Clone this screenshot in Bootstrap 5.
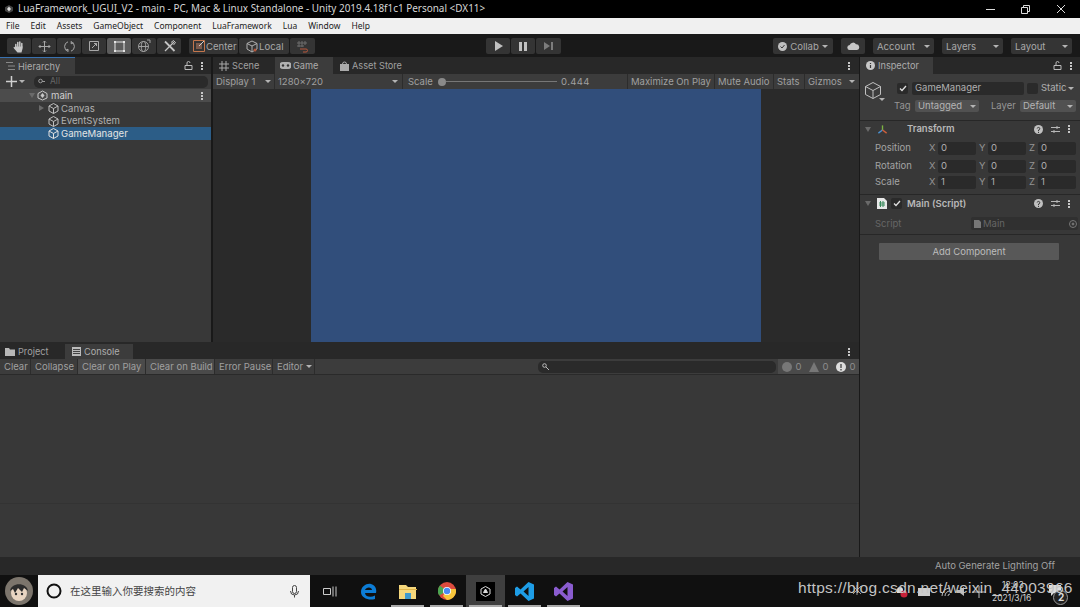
<!DOCTYPE html>
<html lang="en">
<head>
<meta charset="UTF-8">
<title>Unity Editor</title>
<link href="https://cdn.jsdelivr.net/npm/bootstrap@5.3.3/dist/css/bootstrap.min.css" rel="stylesheet">
<style>
  html, body { height: 607px; overflow: hidden; }
  body { background: #191919; font-family: Inter, "Liberation Sans", sans-serif; font-size: 9.5px; color: #b0b0b0; line-height: 1; position: relative; width: 1080px; white-space: nowrap; }
  svg { display: block; flex: none; }

  /* window chrome */
  .title-bar { height: 18px; background: #000; color: #d6d6d6; font-family: "Noto Sans", sans-serif; font-size: 9.95px; padding-left: 4px; gap: 4px; }
  .win-btns { margin-left: auto; gap: 26px; padding-right: 14px; }
  .menu-bar { height: 16px; background: #f0f0f0; color: #222; font-family: "Noto Sans", sans-serif; font-size: 8.5px; padding-left: 6px; gap: 11px; }

  /* toolbar */
  .tool-bar { height: 23px; background: #191919; padding: 4px 8px 0 7px; }
  .tool-btn { height: 16px; background: #343434; border-radius: 2px; margin-right: 1px; justify-content: center; color: #a8a8a8; font-size: 9.6px; flex: none; }
  .tool-btn span:not(.drop-caret) { padding-top: 1px; }
  .tool-btn.on { background: #5c5c5c; }
  .w-tool { width: 24px; }
  .w-drop { width: 61px; margin-right: 8px; padding: 0 4px; justify-content: space-between; }
  .w-drop.last-drop { margin-right: 0; }
  .btn-center { width: 49px; margin-left: 7px; padding-left: 4px; justify-content: flex-start; }
  .btn-center span { margin-left: 1px; }
  .btn-local { width: 50px; padding-left: 7px; justify-content: flex-start; }
  .btn-snap { width: 25px; }
  .btn-play { width: 24px; margin-left: auto; }
  .btn-pause { width: 24px; }
  .btn-step { width: 25px; margin-right: 212px; }
  .btn-collab { width: 60px; margin-right: 8px; gap: 3px; }
  .btn-cloud { width: 24px; margin-right: 8px; }
  .drop-caret { width: 0; height: 0; border-left: 3px solid transparent; border-right: 3px solid transparent; border-top: 3px solid #b4b4b4; flex: none; }

  /* panels */
  .left-stack { width: 859px; flex: none; }
  .main-row { height: 285px; gap: 2px; }
  .side-left { width: 211px; background: #383838; }
  .mid-col { width: 646px; background: #2a2a2a; }
  .tabs-row { height: 17px; background: #282828; font-size: 9.2px; }
  .tab-item { height: 17px; padding-left: 6px; color: #a0a0a0; flex: none; }
  .tab-item span { padding-top: 1px; }
  .tab-item.on { background: #3c3c3c; color: #acacac; }
  .tab-accent { border-top: 1px solid #3a72b0; }
  .tab-gap { margin-left: 3px; }
  .tab-hier { width: 75px; }
  .tab-scene { width: 62px; }
  .tab-game { width: 58px; padding-left: 5px; }
  .tab-game span { margin-left: 2px; }
  .tab-store { padding-left: 7px; }
  .tab-insp { width: 73px; }
  .low-tabs { padding-top: 2px; }
  .low-tabs .tab-item { height: 15px; }
  .tab-project { width: 65px; padding-left: 5px; }
  .tab-console { width: 68px; padding-left: 7px; }
  .panel-lock { margin-left: auto; margin-right: 8px; }
  .dots { width: 2px; height: 8px; background-image: radial-gradient(circle at 1px 1px, #c8c8c8 1px, transparent 1px); background-size: 2px 3px; flex: none; }
  .dots-end { margin-left: auto; margin-right: 9px; }
  .bar-row { height: 15px; background: #3c3c3c; font-size: 9.5px; }
  .bar-cell { height: 15px; padding: 0 3px; border-right: 1px solid #2c2c2c; color: #a0a0a0; flex: none; }

  /* hierarchy */
  .plus-ico { margin-left: 6px; }
  .caret-gap { margin-left: 2px; }
  .search-well { height: 12px; background: #2a2a2a; border-radius: 5px; padding-left: 4px; gap: 5px; color: #666; font-size: 8.5px; }
  .hier-search { margin-left: 9px; margin-right: 3px; flex-grow: 1; }
  .tree-row { height: 12.7px; font-size: 9.6px; gap: 2px; color: #b0b0b0; }
  .tree-row.head { height: 13px; background: #4c4c4c; color: #d0d0d0; padding-left: 29px; }
  .tree-row.sel { background: #2c5d87; color: #e4e4e4; }
  .tree-leaf { padding-left: 48px; }
  .tree-parent { padding-left: 39px; }
  .tree-parent svg { margin-left: 2px; }
  .main-lab { margin-left: 1px; }
  .dots-row { margin-left: auto; margin-right: 8px; }
  .arrow-r { width: 0; height: 0; border-top: 3px solid transparent; border-bottom: 3px solid transparent; border-left: 5px solid #6a6a6a; flex: none; }
  .arrow-d { width: 0; height: 0; border-left: 3px solid transparent; border-right: 3px solid transparent; border-top: 5px solid #6a6a6a; flex: none; }

  /* game */
  .game-view { height: 253px; background: #2a2a2a; }
  .game-blue { width: 450px; background: #314e7b; }
  .cell-display { width: 62px; justify-content: space-between; }
  .cell-res { width: 128px; justify-content: space-between; padding-right: 4px; }
  .cell-scale { width: 225px; padding-left: 5px; }
  .scale-lab { width: 30px; }
  .slider-knob { width: 8px; height: 8px; border-radius: 50%; background: #8a8a8a; flex: none; }
  .slider-line { width: 111px; height: 1px; background: #777; flex: none; }
  .scale-val { margin-left: 4px; letter-spacing: .4px; }
  .cell-max { width: 87px; }
  .cell-mute { width: 59px; }
  .cell-stats { width: 31px; }
  .cell-giz { flex-grow: 1; border: 0; justify-content: space-between; padding-right: 4px; }

  /* console */
  .low-wrap { height: 215px; background: #282828; }
  .cell-clear { width: 31px; padding-left: 4px; }
  .cell-collapse { width: 47px; padding-left: 4px; }
  .cell-cplay { width: 68px; padding-left: 4px; background: #4a4a4a; }
  .cell-cbuild { width: 69px; padding-left: 4px; background: #4a4a4a; }
  .cell-epause { width: 58px; padding-left: 4px; }
  .cell-editor { width: 42px; padding-left: 4px; gap: 3px; }
  .console-search { width: 238px; margin-left: 223px; }
  .count-group { background: #4a4a4a; height: 15px; width: 81px; margin-left: auto; flex: none; }
  .count-item { gap: 4px; flex: 1; justify-content: center; color: #8c8c8c; }
  .console-body { height: 183px; background: #383838; border-top: 1px solid #2a2a2a; }
  .console-low { height: 54px; border-top: 1px solid #333; margin-top: 128px; }

  /* inspector */
  .right-col { width: 221px; background: #383838; border-left: 1px solid #191919; height: 500px; flex: none; }
  .insp-head { height: 47px; border-bottom: 1px solid #272727; background: #3c3c3c; }
  .cube-big { margin: 8px 0 0 5px; }
  .cube-caret { margin: 24px 0 0 -2px; }
  .insp-fields { flex-grow: 1; padding-left: 12px; }
  .name-row { margin-top: 7px; height: 14px; }
  .tag-row { margin-top: 5px; height: 12px; margin-left: -3px; }
  .name-field { width: 112px; margin-left: 4px; }
  .static-box { margin-left: 3px; background: #333; }
  .static-lab { margin-left: 3px; }
  .static-caret { margin-left: 2px; }
  .tag-lab { width: 21px; color: #969696; }
  .layer-lab { width: 29px; margin-left: 12px; color: #969696; }
  .tag-drop { width: 64px; }
  .layer-drop { width: 56px; }
  .field-in { height: 13px; background: #2a2a2a; border-radius: 2px; color: #b0b0b0; padding-left: 3px; flex: none; }
  .drop-sm { height: 12px; background: #515151; border-radius: 2px; padding: 0 3px; color: #b4b4b4; justify-content: space-between; flex: none; }
  .check-box { width: 11px; height: 11px; background: #2a2a2a; border-radius: 2px; justify-content: center; flex: none; }
  .comp-head { height: 16px; font-weight: 600; color: #b8b8b8; padding-left: 5px; }
  .comp-script { height: 17px; margin-top: 4px; border-top: 1px solid #272727; box-sizing: content-box; }
  .axes-ico { margin-left: 6px; }
  .transform-lab { margin-left: 19px; }
  .script-ico { margin-left: 6px; }
  .script-check { margin-left: 4px; }
  .script-lab { margin-left: 5px; }
  .comp-tools { margin-left: auto; padding-right: 10px; gap: 8px; }
  .prop-row { height: 16px; color: #a4a4a4; }
  .prop-first { margin-top: 3px; }
  .prop-gap { margin-top: 2px; }
  .prop-lab { width: 69px; padding-left: 15px; flex: none; }
  .axis-lab { width: 9px; color: #949494; flex: none; }
  .axis-next { margin-left: 3px; }
  .vec-field { width: 38px; }
  .script-row { height: 23px; border-bottom: 1px solid #272727; color: #666; padding-left: 15px; padding-top: 1px; }
  .script-name { width: 96px; flex: none; }
  .script-field { background: #303030; color: #666; gap: 2px; flex-grow: 1; margin-right: 2px; }
  .script-target { margin-left: auto; margin-right: 1px; }
  .add-btn { width: 180px; height: 17px; background: #585858; color: #bcbcbc; margin: 8px 0 0 19px; justify-content: center; border-radius: 1px; }

  /* status + taskbar */
  .status-bar { height: 18px; background: #282828; justify-content: flex-end; padding-right: 25px; color: #a2a2a2; font-size: 9.5px; }
  .task-bar { height: 32px; background: #101010; }
  .avatar-wrap { width: 38px; justify-content: center; flex: none; }
  .task-search { width: 272px; height: 32px; background: #f1f1f1; color: #444; font-family: "Noto Sans CJK SC", sans-serif; font-size: 10.5px; padding: 0 11px 0 8px; gap: 8px; flex: none; }
  .mic-ico { margin-left: auto; }
  .task-ico { width: 39px; height: 32px; justify-content: center; position: relative; flex: none; }
  .task-ico.run::after { content: ""; position: absolute; left: 3px; right: 3px; bottom: 0; height: 2px; background: #aaa; }
  .task-ico.act { background: #3f3f3f; }
  .unity-tile { background: #000; width: 19px; height: 19px; justify-content: center; }

  /* tray and watermark lie over the taskbar */
  .watermark { position: absolute; left: 798px; top: 580px; font-family: "Liberation Sans", sans-serif; font-size: 15.5px; color: #c4c4c4; letter-spacing: .3px; }
  .tray-date { position: absolute; left: 992px; top: 594px; font-size: 8.5px; color: #d0d0d0; }
  .tray-time { position: absolute; left: 1002px; top: 581px; font-size: 8.5px; color: #d0d0d0; }
  .tray-ico { position: absolute; }
  .tray-a { left: 852px; top: 585px; }
  .tray-b { left: 896px; top: 586px; }
  .tray-c { left: 918px; top: 588px; }
  .tray-d { left: 941px; top: 587px; }
  .tray-e { left: 957px; top: 586px; }
  .tray-f { left: 972px; top: 586px; }
  .tray-g { left: 1049px; top: 585px; }
  .tray-h { left: 1053px; top: 590px; }
  .tray-num { position: absolute; left: 1058px; top: 592px; font-size: 10px; font-weight: 700; color: #ddd; }
</style>
</head>
<body>

<div class="title-bar d-flex align-items-center">
  <svg width="10" height="10" viewBox="0 0 10 10"><path d="M5 1 9 3.200V7L5 9 1 7V3.200Z" fill="#444"/><path d="M5 2.500 7 5 5 7.500 3 5Z" fill="#ddd"/></svg>
  <span>LuaFramework_UGUI_V2 - main - PC, Mac &amp; Linux Standalone - Unity 2019.4.18f1c1 Personal &lt;DX11&gt;</span>
  <div class="win-btns d-flex align-items-center">
    <svg width="9" height="9" viewBox="0 0 9 9"><path d="M0 4.500H9" stroke="#ddd"/></svg>
    <svg width="9" height="9" viewBox="0 0 9 9" fill="none" stroke="#ddd"><path d="M.5 2.500h6v6h-6zM2.500 2.500v-2h6v6h-2"/></svg>
    <svg width="10" height="10" viewBox="0 0 10 10"><path d="M1 1 9 9M9 1 1 9" stroke="#ddd"/></svg>
  </div>
</div>

<div class="menu-bar d-flex align-items-center">
  <span>File</span><span>Edit</span><span>Assets</span><span>GameObject</span><span>Component</span><span>LuaFramework</span><span>Lua</span><span>Window</span><span>Help</span>
</div>

<div class="tool-bar d-flex">
  <div class="tool-btn w-tool d-flex align-items-center"><svg width="12" height="13" viewBox="0 0 12 13"><path d="M2.800 8V4.500M4.800 6.500V2.500M6.800 6.500V2M8.800 7V3.500" stroke="#c8c8c8" stroke-width="1.500" stroke-linecap="round"/><path d="M2 6.500H9.600V8.500L8.500 12.500H4.500L1 8.500.5 7.300 1.200 6.800 2.500 7.700Z" fill="#c8c8c8"/></svg></div>
  <div class="tool-btn w-tool d-flex align-items-center"><svg width="13" height="13" viewBox="0 0 13 13"><path d="M6.500 1V12M1 6.500H12M5 2.500 6.500 1 8 2.500M5 10.500 6.500 12 8 10.500M2.500 5 1 6.500 2.500 8M10.500 5 12 6.500 10.500 8" fill="none" stroke="#a8a8a8"/></svg></div>
  <div class="tool-btn w-tool d-flex align-items-center"><svg width="13" height="13" viewBox="0 0 13 13" fill="none" stroke="#a8a8a8"><path d="M4.800 11.200A5 5 0 0 1 5 1.800M8.200 1.800A5 5 0 0 1 8 11.200"/><path d="M5 11.800V9.200L2.800 10.200M8.200 1.200V3.800L10.400 2.800"/></svg></div>
  <div class="tool-btn w-tool d-flex align-items-center"><svg width="12" height="12" viewBox="0 0 12 12" fill="none" stroke="#a8a8a8"><path d="M1.500 1.500h9v9h-9zM4 8 8.500 3.500M6 3.500h2.500V6"/></svg></div>
  <div class="tool-btn w-tool on d-flex align-items-center"><svg width="13" height="13" viewBox="0 0 13 13"><path d="M2 2h9v9H2z" fill="none" stroke="#e4e4e4"/><path d="M1 1h2v2H1zM10 1h2v2h-2zM1 10h2v2H1zM10 10h2v2h-2z" fill="#e4e4e4"/></svg></div>
  <div class="tool-btn w-tool d-flex align-items-center"><svg width="14" height="14" viewBox="0 0 14 14" fill="none" stroke="#a0a0a0"><circle cx="6.500" cy="7.500" r="5"/><ellipse cx="6.500" cy="7.500" rx="2.200" ry="5"/><path d="M1.500 7.500h10M10 1h3v3"/></svg></div>
  <div class="tool-btn w-tool d-flex align-items-center"><svg width="13" height="13" viewBox="0 0 13 13" fill="none" stroke="#c4c4c4"><path d="M2 1.500 11.500 11" stroke-width="1.800"/><path d="M11 2 2 11" stroke-width="1.200"/><path d="M8 2.500 10.500 .5 12.500 2.500 10.500 5" stroke-width="1"/></svg></div>
  <div class="tool-btn btn-center d-flex align-items-center"><svg width="12" height="12" viewBox="0 0 12 12"><path d="M.5.5h11v11H.5z" fill="none" stroke="#c4764c"/><path d="M3 3h6v6H3z" fill="#7b5a4c"/><path d="M6 6 11 1" stroke="#d0d0d0"/></svg><span>Center</span></div>
  <div class="tool-btn btn-local d-flex align-items-center"><svg width="13" height="13" viewBox="0 0 13 13" fill="none" stroke="#b0b0b0"><path d="M6 1 11 3.500V9L6 12 1 9V3.500ZM1 3.500 6 6 11 3.500M6 6V12"/><circle cx="9" cy="10" r="1.500" fill="#b4583c" stroke="none"/></svg><span>Local</span></div>
  <div class="tool-btn btn-snap d-flex align-items-center"><svg width="13" height="13" viewBox="0 0 13 13" fill="none"><path d="M3 1V7M6 1V7M9 1V5M1 3H11M1 6H8" stroke="#6c6c6c"/><path d="M4 9h6a1.500 1.500 0 0 1 0 3H7" stroke="#b8583c"/></svg></div>

  <div class="tool-btn btn-play d-flex align-items-center"><svg width="9" height="10" viewBox="0 0 9 10"><path d="M1 0 9 5 1 10Z" fill="#c0c0c0"/></svg></div>
  <div class="tool-btn btn-pause d-flex align-items-center"><svg width="8" height="9" viewBox="0 0 8 9"><path d="M0 0h3v9H0zM5 0h3v9H5z" fill="#c0c0c0"/></svg></div>
  <div class="tool-btn btn-step d-flex align-items-center"><svg width="9" height="8" viewBox="0 0 9 8"><path d="M0 0 6 4 0 8ZM7 0h2v8H7z" fill="#7c7c7c"/></svg></div>

  <div class="tool-btn btn-collab d-flex align-items-center"><svg width="9" height="9" viewBox="0 0 9 9"><circle cx="4.500" cy="4.500" r="4.500" fill="#c0c0c0"/><path d="M2.500 4.500 4 6 6.500 3" stroke="#383838" fill="none"/></svg><span>Collab</span><span class="drop-caret"></span></div>
  <div class="tool-btn btn-cloud d-flex align-items-center"><svg width="13" height="8" viewBox="0 0 13 8"><path d="M3 8a2.500 2.500 0 0 1-.3-5A3.500 3.500 0 0 1 9 2.300 2.900 2.900 0 0 1 10 8Z" fill="#c8c8c8"/></svg></div>
  <div class="tool-btn w-drop d-flex align-items-center"><span>Account</span><span class="drop-caret"></span></div>
  <div class="tool-btn w-drop d-flex align-items-center"><span>Layers</span><span class="drop-caret"></span></div>
  <div class="tool-btn w-drop last-drop d-flex align-items-center"><span>Layout</span><span class="drop-caret"></span></div>
</div>

<div class="d-flex">
  <div class="left-stack">
    <div class="main-row d-flex">
      <div class="side-left">
        <div class="tabs-row d-flex align-items-center pe-2">
          <div class="tab-item tab-hier on tab-accent d-flex align-items-center"><svg width="9" height="8" viewBox="0 0 9 8"><path d="M0 .5h7M2 4h7M2 7.500h7" stroke="#888"/></svg><span class="tab-gap">Hierarchy</span></div>
          <svg class="panel-lock" width="9" height="9" viewBox="0 0 9 9" fill="none" stroke="#bbb"><path d="M1 4.500h7v4H1zM3 4.500V2a1.500 1.500 0 0 1 3 0"/></svg>
          <span class="dots"></span>
        </div>
        <div class="bar-row d-flex align-items-center">
          <svg class="plus-ico" width="11" height="11" viewBox="0 0 11 11"><path d="M5.500 0V11M0 5.500H11" stroke="#d0d0d0" stroke-width="1.500"/></svg>
          <span class="drop-caret caret-gap"></span>
          <div class="search-well hier-search d-flex align-items-center"><svg width="7" height="7" viewBox="0 0 7 7" fill="none" stroke="#999"><circle cx="2.500" cy="3" r="1.800"/><path d="M4 3.500h3"/></svg><span>All</span></div>
        </div>
        <div class="tree-row head d-flex align-items-center">
          <span class="arrow-d"></span>
          <svg width="11" height="11" viewBox="0 0 11 11"><path d="M5.500 1 10 3.500V8L5.500 10 1 8V3.500Z" fill="none" stroke="#c8c8c8"/><path d="M5.500 3 7.500 5.500 5.500 8 3.500 5.500Z" fill="#c8c8c8"/></svg>
          <span class="main-lab">main</span>
          <span class="dots dots-row"></span>
        </div>
        <div class="tree-row tree-parent d-flex align-items-center"><span class="arrow-r"></span><svg width="11" height="11" viewBox="0 0 11 11" fill="none" stroke="#c0c0c0"><path d="M5.500 .5 10 3V8L5.500 10.500 1 8V3ZM1 3 5.500 5.500 10 3M5.500 5.500V10.500"/></svg><span>Canvas</span></div>
        <div class="tree-row tree-leaf d-flex align-items-center"><svg width="11" height="11" viewBox="0 0 11 11" fill="none" stroke="#c0c0c0"><path d="M5.500 .5 10 3V8L5.500 10.500 1 8V3ZM1 3 5.500 5.500 10 3M5.500 5.500V10.500"/></svg><span>EventSystem</span></div>
        <div class="tree-row tree-leaf sel d-flex align-items-center"><svg width="11" height="11" viewBox="0 0 11 11" fill="none" stroke="#e0e0e0"><path d="M5.500 .5 10 3V8L5.500 10.500 1 8V3ZM1 3 5.500 5.500 10 3M5.500 5.500V10.500"/></svg><span>GameManager</span></div>
      </div>
      <div class="mid-col">
        <div class="tabs-row d-flex align-items-center">
          <div class="tab-item tab-scene d-flex align-items-center"><svg width="10" height="10" viewBox="0 0 10 10"><path d="M3 0V10M7 0V10M0 3H10M0 7H10" stroke="#a8a8a8"/></svg><span class="tab-gap">Scene</span></div>
          <div class="tab-item tab-game on d-flex align-items-center"><svg width="11" height="7" viewBox="0 0 11 7"><path d="M3 0h5a3 3 0 0 1 0 7H3a3 3 0 0 1 0-7Z" fill="#b0b0b0"/><circle cx="3" cy="3.500" r="1.200" fill="#333"/><circle cx="8" cy="3.500" r="1.200" fill="#333"/></svg><span>Game</span></div>
          <div class="tab-item tab-store d-flex align-items-center"><svg width="9" height="10" viewBox="0 0 9 10"><path d="M0 3h9v7H0z" fill="#aaa"/><path d="M2.500 3a2 2 0 0 1 4 0" stroke="#aaa" fill="none"/></svg><span class="tab-gap">Asset Store</span></div>
          <span class="dots dots-end"></span>
        </div>
        <div class="bar-row d-flex align-items-center">
          <div class="bar-cell cell-display d-flex align-items-center"><span>Display 1</span><span class="drop-caret"></span></div>
          <div class="bar-cell cell-res d-flex align-items-center"><span>1280x720</span><span class="drop-caret"></span></div>
          <div class="bar-cell cell-scale d-flex align-items-center"><span class="scale-lab">Scale</span><span class="slider-knob"></span><span class="slider-line"></span><span class="scale-val">0.444</span></div>
          <div class="bar-cell cell-max d-flex align-items-center"><span>Maximize On Play</span></div>
          <div class="bar-cell cell-mute d-flex align-items-center"><span>Mute Audio</span></div>
          <div class="bar-cell cell-stats d-flex align-items-center"><span>Stats</span></div>
          <div class="bar-cell cell-giz d-flex align-items-center"><span>Gizmos</span><span class="drop-caret"></span></div>
        </div>
        <div class="game-view d-flex justify-content-center">
          <div class="game-blue"></div>
        </div>
      </div>
    </div>
    <div class="low-wrap">
      <div class="tabs-row low-tabs d-flex align-items-center">
        <div class="tab-item tab-project d-flex align-items-center"><svg width="10" height="8" viewBox="0 0 10 8"><path d="M0 0h4l1 1.500h5V8H0z" fill="#b8b8b8"/></svg><span class="tab-gap">Project</span></div>
        <div class="tab-item tab-console on d-flex align-items-center"><svg width="9" height="9" viewBox="0 0 9 9"><path d="M0 0h9v9H0z" fill="#bbb"/><path d="M1 2.500h7M1 4.500h7M1 6.500h7" stroke="#444"/></svg><span class="tab-gap">Console</span></div>
        <span class="dots dots-end"></span>
      </div>
      <div class="bar-row d-flex align-items-center">
        <div class="bar-cell cell-clear d-flex align-items-center"><span>Clear</span></div>
        <div class="bar-cell cell-collapse d-flex align-items-center"><span>Collapse</span></div>
        <div class="bar-cell cell-cplay d-flex align-items-center"><span>Clear on Play</span></div>
        <div class="bar-cell cell-cbuild d-flex align-items-center"><span>Clear on Build</span></div>
        <div class="bar-cell cell-epause d-flex align-items-center"><span>Error Pause</span></div>
        <div class="bar-cell cell-editor d-flex align-items-center"><span>Editor</span><span class="drop-caret"></span></div>
        <div class="search-well console-search d-flex align-items-center"><svg width="7" height="7" viewBox="0 0 7 7" fill="none" stroke="#bbb"><circle cx="2.500" cy="2.500" r="1.800"/><path d="M4 4l3 3"/></svg></div>
        <div class="count-group d-flex align-items-center">
          <div class="count-item d-flex align-items-center"><svg width="10" height="10" viewBox="0 0 10 10"><circle cx="5" cy="5" r="5" fill="#777"/></svg><span>0</span></div>
          <div class="count-item d-flex align-items-center"><svg width="10" height="10" viewBox="0 0 10 10"><path d="M5 0 10 10H0Z" fill="#777"/></svg><span>0</span></div>
          <div class="count-item d-flex align-items-center"><svg width="10" height="10" viewBox="0 0 10 10"><circle cx="5" cy="5" r="5" fill="#ddd"/><path d="M5 2V6M5 7V8.500" stroke="#555" stroke-width="1.500"/></svg><span>0</span></div>
        </div>
      </div>
      <div class="console-body"><div class="console-low"></div></div>
    </div>
  </div>

  <div class="right-col">
    <div class="tabs-row d-flex align-items-center pe-2">
      <div class="tab-item tab-insp on d-flex align-items-center"><svg width="9" height="9" viewBox="0 0 9 9"><circle cx="4.500" cy="4.500" r="4.500" fill="#c8c8c8"/><path d="M4.500 2V3M4.500 4V7" stroke="#383838" stroke-width="1.200"/></svg><span class="tab-gap">Inspector</span></div>
      <svg class="panel-lock" width="9" height="9" viewBox="0 0 9 9" fill="none" stroke="#bbb"><path d="M1 4.500h7v4H1zM3 4.500V2a1.500 1.500 0 0 1 3 0"/></svg>
      <span class="dots"></span>
    </div>
    <div class="insp-head d-flex">
      <svg class="cube-big" width="16" height="17" viewBox="0 0 16 17" fill="none" stroke="#c0c0c0"><path d="M8 .5 15.500 4.500V12.500L8 16.500 .5 12.500V4.500ZM.5 4.500 8 8.500 15.500 4.500M8 8.500V16.500"/></svg>
      <span class="drop-caret cube-caret"></span>
      <div class="insp-fields">
        <div class="name-row d-flex align-items-center">
          <span class="check-box d-flex align-items-center"><svg width="8" height="7" viewBox="0 0 8 7"><path d="M1 3.500 3 5.500 7 1" fill="none" stroke="#e0e0e0" stroke-width="1.300"/></svg></span>
          <div class="field-in name-field d-flex align-items-center">GameManager</div>
          <span class="check-box static-box"></span>
          <span class="static-lab">Static</span><span class="drop-caret static-caret"></span>
        </div>
        <div class="tag-row d-flex align-items-center">
          <span class="tag-lab">Tag</span>
          <div class="drop-sm tag-drop d-flex align-items-center"><span>Untagged</span><span class="drop-caret"></span></div>
          <span class="layer-lab">Layer</span>
          <div class="drop-sm layer-drop d-flex align-items-center"><span>Default</span><span class="drop-caret"></span></div>
        </div>
      </div>
    </div>
    <div class="comp-head d-flex align-items-center">
      <span class="arrow-d"></span>
      <svg class="axes-ico" width="11" height="11" viewBox="0 0 12 11"><path d="M6 1V6" stroke="#7cb342" stroke-width="1.500"/><path d="M6 6 1.500 9.500" stroke="#4a90d0" stroke-width="1.500"/><path d="M6 6 10.500 9.500" stroke="#d0603c" stroke-width="1.500"/></svg>
      <span class="transform-lab">Transform</span>
      <div class="comp-tools d-flex align-items-center"><svg width="9" height="9" viewBox="0 0 9 9"><circle cx="4.500" cy="4.500" r="4.500" fill="#c0c0c0"/><path d="M3.200 3.500a1.300 1.300 0 1 1 1.300 1.500V6M4.500 6.800V8" stroke="#383838" fill="none"/></svg><svg width="9" height="9" viewBox="0 0 9 9"><path d="M0 2.500h9M0 6.500h9M6 1v3M3 5v3" stroke="#b8b8b8"/></svg><span class="dots"></span></div>
    </div>
    <div class="prop-row prop-first d-flex align-items-center"><span class="prop-lab">Position</span><span class="axis-lab">X</span><div class="field-in vec-field d-flex align-items-center">0</div><span class="axis-lab axis-next">Y</span><div class="field-in vec-field d-flex align-items-center">0</div><span class="axis-lab axis-next">Z</span><div class="field-in vec-field d-flex align-items-center">0</div></div>
    <div class="prop-row prop-gap d-flex align-items-center"><span class="prop-lab">Rotation</span><span class="axis-lab">X</span><div class="field-in vec-field d-flex align-items-center">0</div><span class="axis-lab axis-next">Y</span><div class="field-in vec-field d-flex align-items-center">0</div><span class="axis-lab axis-next">Z</span><div class="field-in vec-field d-flex align-items-center">0</div></div>
    <div class="prop-row d-flex align-items-center"><span class="prop-lab">Scale</span><span class="axis-lab">X</span><div class="field-in vec-field d-flex align-items-center">1</div><span class="axis-lab axis-next">Y</span><div class="field-in vec-field d-flex align-items-center">1</div><span class="axis-lab axis-next">Z</span><div class="field-in vec-field d-flex align-items-center">1</div></div>
    <div class="comp-head comp-script d-flex align-items-center">
      <span class="arrow-d"></span>
      <svg class="script-ico" width="10" height="11" viewBox="0 0 10 11"><path d="M0 0h7l3 3v8H0z" fill="#e8e8e8"/><path d="M3.500 3V9M6 3V9M2 5H8M2 7H8" stroke="#3a8a5c"/></svg>
      <span class="check-box script-check d-flex align-items-center"><svg width="8" height="7" viewBox="0 0 8 7"><path d="M1 3.500 3 5.500 7 1" fill="none" stroke="#e0e0e0" stroke-width="1.300"/></svg></span>
      <span class="script-lab">Main (Script)</span>
      <div class="comp-tools d-flex align-items-center"><svg width="9" height="9" viewBox="0 0 9 9"><circle cx="4.500" cy="4.500" r="4.500" fill="#c0c0c0"/><path d="M3.200 3.500a1.300 1.300 0 1 1 1.300 1.500V6M4.500 6.800V8" stroke="#383838" fill="none"/></svg><svg width="9" height="9" viewBox="0 0 9 9"><path d="M0 2.500h9M0 6.500h9M6 1v3M3 5v3" stroke="#b8b8b8"/></svg><span class="dots"></span></div>
    </div>
    <div class="script-row d-flex align-items-center">
      <span class="script-name">Script</span>
      <div class="field-in script-field d-flex align-items-center"><svg width="7" height="8" viewBox="0 0 7 8"><path d="M0 0h5l2 2v6H0z" fill="#777"/></svg><span>Main</span><svg class="script-target" width="8" height="8" viewBox="0 0 8 8" fill="none" stroke="#777"><circle cx="4" cy="4" r="3.500"/><circle cx="4" cy="4" r="1" fill="#777"/></svg></div>
    </div>
    <div class="add-btn d-flex align-items-center">Add Component</div>
  </div>
</div>

<div class="status-bar d-flex align-items-center"><span>Auto Generate Lighting Off</span></div>

<div class="task-bar d-flex align-items-center">
  <div class="avatar-wrap d-flex align-items-center">
    <svg width="28" height="28" viewBox="0 0 28 28"><circle cx="14" cy="14" r="14" fill="#7c756c"/><circle cx="14" cy="16" r="8" fill="#e9d5c2"/><path d="M5 14C6 5 22 5 23 14L19 11 17 15 13 11 10 16 8 12Z" fill="#2c2c2c"/><circle cx="11" cy="17" r="1.200" fill="#333"/><circle cx="17" cy="17" r="1.200" fill="#333"/></svg>
  </div>
  <div class="task-search d-flex align-items-center">
    <svg width="16" height="16" viewBox="0 0 16 16"><circle cx="8" cy="8" r="6.500" fill="none" stroke="#111" stroke-width="2"/></svg>
    <span>在这里输入你要搜索的内容</span>
    <svg class="mic-ico" width="9" height="13" viewBox="0 0 9 13" fill="none" stroke="#444"><rect x="2.500" y=".5" width="4" height="8" rx="2"/><path d="M.5 6a4 4 0 0 0 8 0M4.500 10v2.500"/></svg>
  </div>
  <div class="task-ico d-flex align-items-center"><svg width="14" height="11" viewBox="0 0 14 11" fill="none" stroke="#ccc"><path d="M.5 2.500h7v6h-7zM10 .5v10M13 .5v10"/></svg></div>
  <div class="task-ico d-flex align-items-center"><svg width="17" height="17" viewBox="0 0 17 17"><path d="M16 10H5c.5 4 6 5 10 2.500v3.500C9 18 1 15 1 9 1 3 7 0 11 1c4 1 6 5 5 9ZM5 7h7c0-3.500-6-3.500-7 0Z" fill="#0c7cd5"/></svg></div>
  <div class="task-ico run d-flex align-items-center"><svg width="18" height="15" viewBox="0 0 18 15"><path d="M0 1h7l2 2h8v12H0z" fill="#f5d77c"/><path d="M0 5h18v1H0z" fill="#e0b44a"/><path d="M6 9h6v6H6z" fill="#3f9ad0"/></svg></div>
  <div class="task-ico run d-flex align-items-center"><svg width="18" height="18" viewBox="0 0 18 18"><circle cx="9" cy="9" r="9" fill="#dd4b3e"/><path d="M9 9 1.200 13.500A9 9 0 0 1 1.800 3.600Z" fill="#4aa651"/><path d="M9 18A9 9 0 0 0 17.800 7H9L5 14Z" fill="#f6c63c"/><circle cx="9" cy="9" r="4" fill="#fff"/><circle cx="9" cy="9" r="3.200" fill="#4a8af4"/></svg></div>
  <div class="task-ico act run d-flex align-items-center"><div class="unity-tile d-flex align-items-center"><svg width="11" height="11" viewBox="0 0 11 11" fill="none" stroke="#ddd"><path d="M5.500 .5 10 3V8L5.500 10.500 1 8V3Z"/><path d="M5.500 3 7.500 6.500H3.500Z" fill="#ddd"/></svg></div></div>
  <div class="task-ico run d-flex align-items-center"><svg width="19" height="19" viewBox="0 0 19 19"><path d="M13.500 0 19 2.500V16.500L13.500 19 5.500 11.500 2 14.500 0 13V6L2 4.500 5.500 7.500ZM13.500 5 8.500 9.500 13.500 14Z" fill="#1e9de6"/></svg></div>
  <div class="task-ico run d-flex align-items-center"><svg width="19" height="19" viewBox="0 0 19 19"><path d="M13.500 0 19 2.500V16.500L13.500 19 5.500 11.500 2 14.500 0 13V6L2 4.500 5.500 7.500ZM13.500 5 8.500 9.500 13.500 14Z" fill="#8a5ccf"/></svg></div>
</div>

<!-- tray sits under the blog watermark, both overlap like the reference -->
<svg class="tray-ico tray-a" width="10" height="10" viewBox="0 0 10 10"><path d="M1 1 9 9M9 1 1 9M5 0V10" stroke="#999"/></svg>
<svg class="tray-ico tray-b" width="12" height="12" viewBox="0 0 12 12"><path d="M1 4a3 3 0 0 1 6 0v3H1z" fill="#ddd"/><circle cx="8" cy="8" r="3.500" fill="#c9223a"/></svg>
<svg class="tray-ico tray-c" width="12" height="8" viewBox="0 0 12 8"><path d="M0 0h12v8H0z" fill="#ccc"/></svg>
<svg class="tray-ico tray-d" width="10" height="10" viewBox="0 0 10 10" fill="none" stroke="#bbb"><path d="M1 9A8 8 0 0 1 9 1M4 9A5 5 0 0 1 9 4M7 9A2 2 0 0 1 9 7"/></svg>
<svg class="tray-ico tray-e" width="10" height="11" viewBox="0 0 10 11"><path d="M0 4h3L7 1V10L3 7H0Z" fill="#bbb"/></svg>
<svg class="tray-ico tray-f" width="14" height="12" viewBox="0 0 14 12"><path d="M7 0V12M0 6H14" stroke="#bbb"/></svg>
<span class="tray-time">12:03</span>
<span class="tray-date">2021/3/16</span>
<svg class="tray-ico tray-g" width="12" height="11" viewBox="0 0 12 11"><path d="M0 0h12v8H5L2 11V8H0Z" fill="#ddd"/></svg>
<svg class="tray-ico tray-h" width="15" height="15" viewBox="0 0 15 15"><circle cx="7.500" cy="7.500" r="7" fill="#222" stroke="#999"/></svg>
<span class="tray-num">2</span>
<div class="watermark">https://blog.csdn.net/weixin_44003966</div>

<script src="https://cdn.jsdelivr.net/npm/bootstrap@5.3.3/dist/js/bootstrap.bundle.min.js"></script>
</body>
</html>
